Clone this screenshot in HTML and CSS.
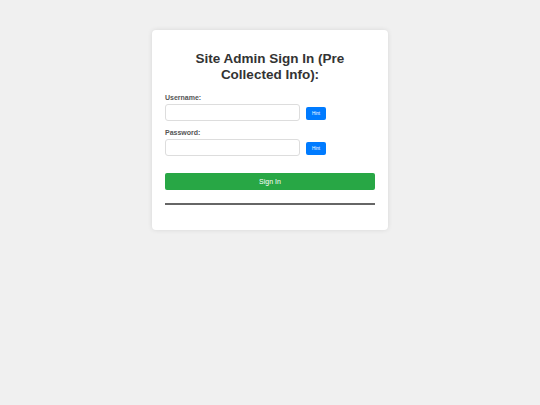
FILE: index.html
```html
<!DOCTYPE html>
<html>
<head>
<meta charset="utf-8">
<link rel="stylesheet" href="styles.css">
</head>
<body>
<div class="card">
  <h1 class="title">Site Admin Sign In (Pre Collected Info):</h1>
  <div class="field">
    <label class="label">Username:</label>
    <div class="row">
      <input class="input" type="text">
      <button class="hint">Hint</button>
    </div>
  </div>
  <div class="field">
    <label class="label">Password:</label>
    <div class="row">
      <input class="input" type="password">
      <button class="hint">Hint</button>
    </div>
  </div>
  <button class="signin">Sign In</button>
  <hr class="rule">
</div>
</body>
</html>
```
FILE: styles.css
```css
html, body {
  margin: 0;
  padding: 0;
  background: #f0f0f0;
  font-family: "Liberation Sans", Arial, sans-serif;
}
body {
  width: 540px;
  height: 405px;
  display: flex;
  justify-content: center;
  align-items: flex-start;
}
.card {
  margin-top: 30px;
  width: 236px;
  box-sizing: border-box;
  background: #fff;
  border-radius: 4px;
  box-shadow: 0 0 5px rgba(0,0,0,0.1);
  padding: 21px 13px 25px;
}
.title {
  margin: 0 0 10px;
  text-align: center;
  font-size: 13.5px;
  line-height: 16px;
  font-weight: bold;
  color: #333;
}
.field + .field {
  margin-top: 7px;
}
.label {
  display: block;
  font-size: 7px;
  font-weight: bold;
  color: #555;
  line-height: 9px;
  margin-bottom: 2px;
}
.row {
  display: flex;
  align-items: center;
  gap: 6px;
}
.input {
  width: 135px;
  height: 17px;
  box-sizing: border-box;
  border: 1px solid #ddd;
  border-radius: 3px;
  padding: 0;
  margin: 0;
}
.hint {
  width: 20px;
  height: 13px;
  margin-top: 1px;
  padding: 0;
  border: none;
  border-radius: 2px;
  background: #007bff;
  color: #fff;
  font-size: 4.5px;
  font-family: "Liberation Sans", Arial, sans-serif;
}
.signin {
  display: block;
  width: 100%;
  height: 17px;
  margin-top: 17px;
  padding: 0;
  border: none;
  border-radius: 2px;
  background: #28a745;
  color: #fff;
  font-size: 7px;
  font-weight: normal;
  font-family: "Liberation Sans", Arial, sans-serif;
}
.rule {
  margin: 13px 0 0;
  border: none;
  border-top: 2px solid #666;
  height: 0;
}
```
